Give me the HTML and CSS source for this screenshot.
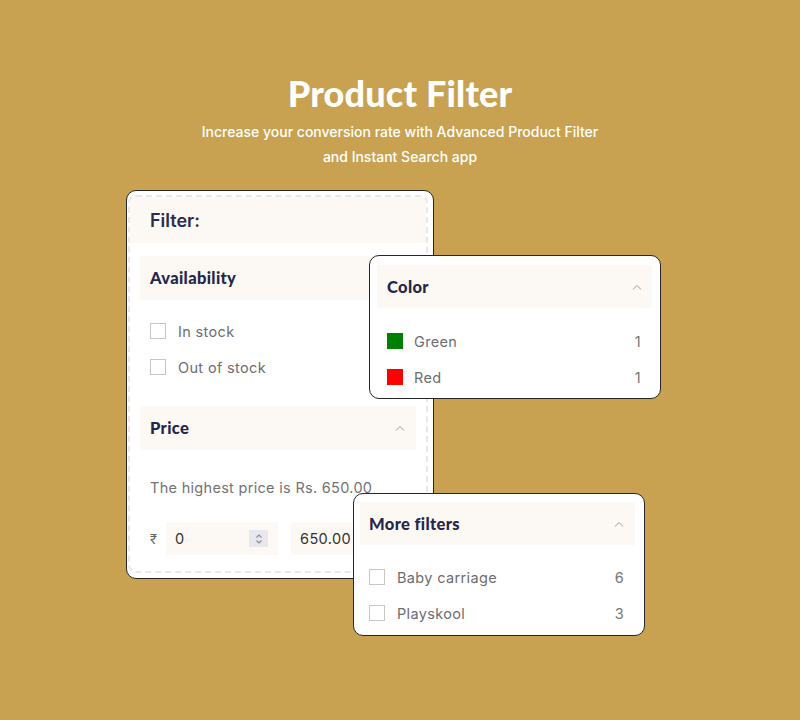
FILE: index.html
```html
<!DOCTYPE html>
<html lang="en">
<head>
<meta charset="utf-8">
<title>Product Filter</title>
<link rel="stylesheet" href="styles.css">
</head>
<body>
<div class="page">
  <h1 class="title">Product Filter</h1>
  <p class="subtitle">Increase your conversion rate with Advanced Product Filter<br>and Instant Search app</p>

  <div class="card main-card">
    <div class="dashed">
      <div class="filter-head">Filter:</div>

      <div class="section">
        <div class="sec-head"><span>Availability</span></div>
        <ul class="opts">
          <li class="opt"><span class="box"></span><span class="lbl">In stock</span></li>
          <li class="opt"><span class="box"></span><span class="lbl">Out of stock</span></li>
        </ul>
      </div>

      <div class="section price-sec">
        <div class="sec-head"><span>Price</span>
          <svg class="chev" width="10" height="6" viewBox="0 0 10 6"><path d="M1 5.5 L5 1.5 L9 5.5" fill="none" stroke="#9a9a9a" stroke-width="1"/></svg>
        </div>
        <p class="highest">The highest price is Rs. 650.00</p>
        <div class="price-row">
          <span class="cur">₹</span>
          <div class="inp"><span>0</span>
            <span class="spin"><svg width="8" height="12" viewBox="0 0 8 12"><path d="M1.5 4.5 L4 2 L6.5 4.5 M1.5 7.5 L4 10 L6.5 7.5" fill="none" stroke="#8a8a99" stroke-width="1.1"/></svg></span>
          </div>
          <div class="inp inp2"><span>650.00</span></div>
        </div>
      </div>
    </div>
  </div>

  <div class="card pop color-card">
    <div class="sec-head"><span>Color</span>
      <svg class="chev" width="10" height="6" viewBox="0 0 10 6"><path d="M1 5.5 L5 1.5 L9 5.5" fill="none" stroke="#9a9a9a" stroke-width="1"/></svg>
    </div>
    <ul class="opts pop-opts">
      <li class="opt"><span class="swatch green"></span><span class="lbl">Green</span><span class="cnt">1</span></li>
      <li class="opt"><span class="swatch red"></span><span class="lbl">Red</span><span class="cnt">1</span></li>
    </ul>
  </div>

  <div class="card pop more-card">
    <div class="sec-head"><span>More filters</span>
      <svg class="chev" width="10" height="6" viewBox="0 0 10 6"><path d="M1 5.5 L5 1.5 L9 5.5" fill="none" stroke="#9a9a9a" stroke-width="1"/></svg>
    </div>
    <ul class="opts pop-opts more-opts">
      <li class="opt"><span class="box"></span><span class="lbl">Baby carriage</span><span class="cnt">6</span></li>
      <li class="opt"><span class="box"></span><span class="lbl">Playskool</span><span class="cnt">3</span></li>
    </ul>
  </div>
</div>
</body>
</html>
```

FILE: styles.css
```css
* { box-sizing: border-box; }
html, body { margin: 0; padding: 0; }
body {
  background: #c8a251;
  font-family: Inter, "Noto Sans", sans-serif;
  width: 800px;
  height: 720px;
  overflow: hidden;
}
.page {
  position: relative;
  width: 800px;
  height: 720px;
  padding-top: 71px;
}
.title {
  margin: 0;
  text-align: center;
  font-family: Lato, sans-serif;
  font-weight: 900;
  font-size: 36px;
  line-height: 44px;
  color: #fff;
  letter-spacing: 0.2px;
}
.subtitle {
  margin: 4px 0 0;
  text-align: center;
  color: #fff;
  font-size: 14px;
  font-weight: 500;
  line-height: 25px;
}
.card {
  background: #fff;
  border: 1px solid #262626;
  border-radius: 10px;
}
.main-card {
  margin: 21px 0 0 126px;
  width: 308px;
  padding: 4px 5px 5px 1px;
}
.dashed {
  border: 2px dashed #ece6e6;
  border-radius: 8px;
  overflow: hidden;
  padding-bottom: 16px;
}
.filter-head {
  background: #fcf8f4;
  height: 46px;
  padding-left: 20px;
  display: flex;
  align-items: center;
  font-size: 18px;
  font-weight: 600;
  color: #2b2d4f;
}
.section { margin: 13px 10px 0; }
.price-sec { margin-top: 21px; }
.sec-head {
  background: #fcf8f3;
  height: 44px;
  padding: 0 11px 0 10px;
  display: flex;
  align-items: center;
  justify-content: space-between;
  font-family: Lato, sans-serif;
  font-weight: 900;
  font-size: 16.5px;
  letter-spacing: 0.35px;
  color: #24264b;
}
.chev { display: block; }
.opts { list-style: none; margin: 0; padding: 13px 0 0; }
.opt {
  height: 36px;
  display: flex;
  align-items: center;
  padding-left: 10px;
  font-size: 14.5px;
  letter-spacing: 0.35px;
  color: #6d6d72;
}
.box {
  width: 16px;
  height: 16px;
  border: 1px solid #c6c6c6;
  margin-right: 12px;
  flex: none;
}
.lbl { flex: 1; }
.highest {
  margin: 28px 0 0 10px;
  font-size: 14.5px;
  line-height: 20px;
  letter-spacing: 0.3px;
  color: #737378;
}
.price-row {
  margin-top: 24px;
  display: flex;
  align-items: center;
  padding-left: 10px;
}
.cur { font-size: 13px; color: #666; width: 16px; }
.inp {
  width: 112px;
  height: 33px;
  background: #fcf8f3;
  display: flex;
  align-items: center;
  justify-content: space-between;
  padding: 0 10px 0 9px;
  font-size: 14.5px;
  letter-spacing: 0.4px;
  color: #333;
}
.inp2 { width: 125px; margin-left: 13px; }
.spin {
  width: 19px;
  height: 17px;
  background: #e8e7ee;
  display: flex;
  align-items: center;
  justify-content: center;
}
.pop {
  position: absolute;
  width: 292px;
}
.color-card {
  left: 369px;
  top: 255px;
  height: 144px;
  padding: 9px 8px 0 7px;
}
.color-card .sec-head { height: 43px; padding-right: 10px; }
.pop-opts { padding-top: 15px; }
.pop-opts .opt { padding-right: 11px; }
.swatch {
  width: 16px;
  height: 16px;
  margin-right: 11px;
  flex: none;
}
.green { background: #008000; }
.red { background: #ff0000; }
.cnt { color: #777; }
.more-card {
  left: 353px;
  top: 493px;
  height: 143px;
  padding: 8px 9px 0 6px;
}
.more-card .sec-head { height: 43px; padding-left: 9px; }
.more-opts { padding-top: 14px; }
.more-opts .opt { padding-left: 9px; }
```
